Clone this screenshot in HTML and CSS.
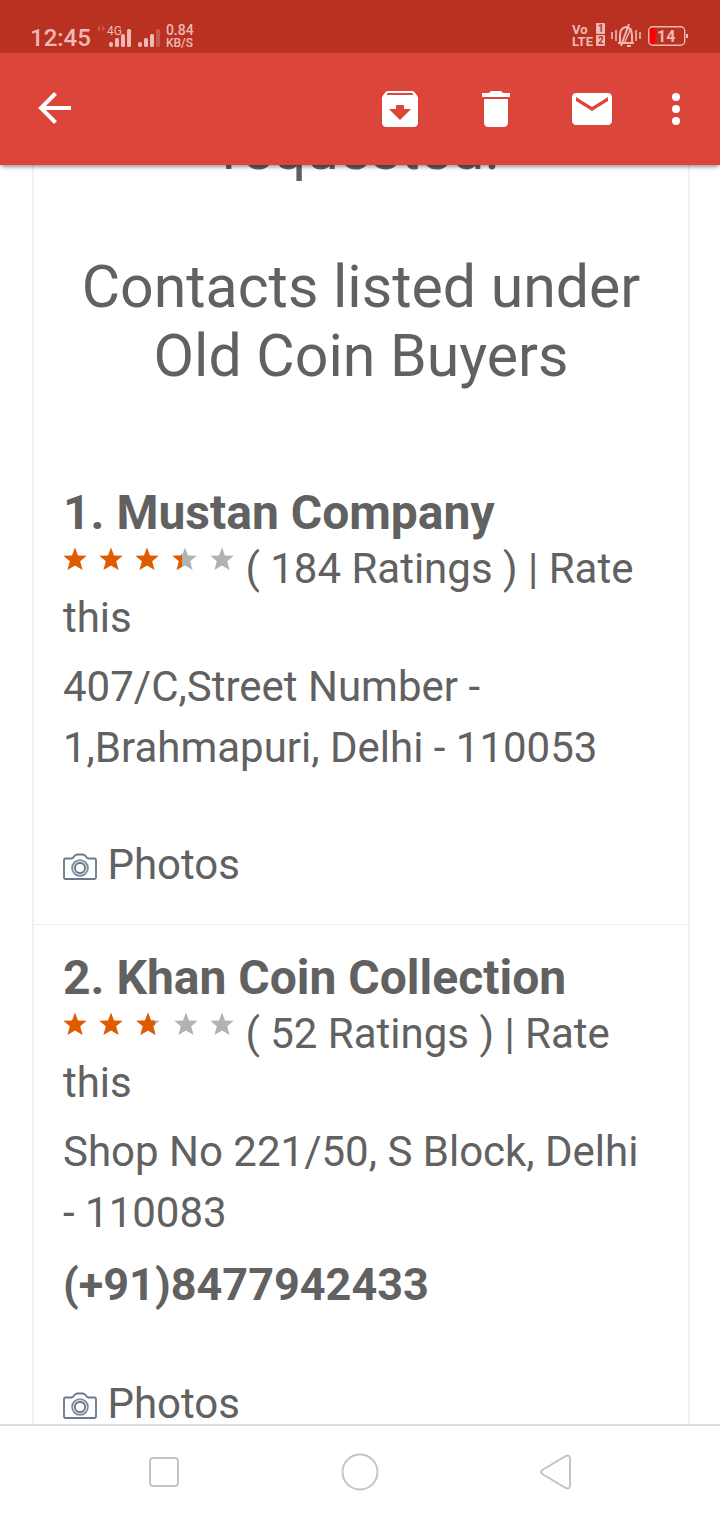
FILE: index.html
```html
<!DOCTYPE html>
<html lang="en">
<head>
<meta charset="utf-8">
<meta name="viewport" content="width=device-width, initial-scale=1">
<title>Old Coin Buyers</title>
<link rel="stylesheet" href="styles.css">
</head>
<body>
<svg class="defs" aria-hidden="true">
  <symbol id="star" viewBox="0 0 24 24"><path d="M12 0.5 15 8.5 23.7 8.7 17.2 14.2 19.6 23 12 18.4 4.4 23 6.8 14.2 0.3 8.7 9 8.5Z"/></symbol>
  <symbol id="camera" viewBox="0 0 34 28">
    <path d="M2.500 5.500H8.500Q10 5.500 11 3.500L12 2.500 14 1.500H20L22 2.500 23 3.500Q24 5.500 25.500 5.500H31.500Q33 5.500 33 7V24.500Q33 26 31.500 26H2.500Q1 26 1 24.500V7Q1 5.500 2.500 5.500Z" fill="#fff" stroke="#69788f" stroke-width="1.800"/>
    <circle cx="17" cy="15" r="8" fill="#d4d9e1" stroke="#7c899b" stroke-width="1.600"/>
    <circle cx="17" cy="15" r="5" fill="#fff" stroke="#69788f" stroke-width="1.800"/>
  </symbol>
</svg>

<div class="status">
  <div class="status-group">
    <span class="clock">12:45</span>
    <svg class="signal" width="65" height="26" viewBox="0 0 65 26" fill="#eeb9b4">
      <g opacity=".3"><path d="M4 2 1 5.500 4 9ZM6 2 9 5.500 6 9Z"/></g>
      <text class="net" x="11" y="12">4G</text>
      <rect x="13" y="19" width="4" height="5" rx="2"/><rect x="19" y="15" width="4" height="9" rx="1.500"/><rect x="25" y="11" width="4" height="13" rx="1.500"/><rect x="31" y="6" width="4" height="18" rx="1.500"/>
      <rect x="42" y="19" width="4" height="5" rx="2"/><rect x="48" y="15" width="4" height="9" rx="1.500"/><rect x="54" y="11" width="4" height="13" rx="1.500"/><rect x="60" y="6" width="4" height="18" rx="1.500" opacity=".3"/>
    </svg>
    <span class="speed"><span class="rate">0.84</span><span class="unit">KB/S</span></span>
  </div>
  <div class="status-group">
    <svg width="34" height="26" viewBox="0 0 34 26">
      <text class="volte" x="0" y="11">Vo</text><text class="volte" x="0" y="23">LTE</text>
      <rect x="24" y="0" width="9" height="11" rx="1" fill="#eeb9b4"/><rect x="24" y="12" width="9" height="11" rx="1" fill="#eeb9b4"/>
      <text class="sim" x="26" y="9">1</text><text class="sim" x="26" y="21">2</text>
    </svg>
    <svg class="bell" width="30" height="24" viewBox="0 0 30 24" fill="none" stroke="#eeb9b4" stroke-width="2">
      <path d="M1 8V15M5 6V17M25 6V17M29 8V15" stroke-width="1.600"/>
      <path d="M7 19H23M9 19V11Q9 4 15 3 21 4 21 11V19M18 0 10 22M16 22H20"/><path d="M20 4 13 20" stroke-width="1.400"/>
    </svg>
    <svg width="40" height="20" viewBox="0 0 40 20">
      <rect x="1.500" y="1.500" width="6" height="17" rx="1" fill="#f00"/>
      <rect x="0.700" y="0.700" width="36" height="18.600" rx="4" fill="none" stroke="#eeb9b4" stroke-width="1.400"/>
      <rect x="38" y="8" width="2" height="4" fill="#eeb9b4"/>
      <text class="battery" x="9" y="16">14</text>
    </svg>
  </div>
</div>

<header class="appbar">
  <button class="icon" aria-label="Back"><svg width="48" height="48" viewBox="0 0 48 48"><path d="M23.500 8.500 9 23 23.500 37.500M9 23H39" fill="none" stroke="#fff" stroke-width="4"/></svg></button>
  <div class="actions">
    <button class="icon" aria-label="Archive"><svg width="48" height="48" viewBox="0 0 24 24" fill="#fff"><path d="m20.540 5.230-1.390-1.680C18.880 3.210 18.470 3 18 3H6c-.47 0-.88.210-1.160.550L3.460 5.230C3.170 5.570 3 6.020 3 6.500V19c0 1.100.9 2 2 2h14c1.100 0 2-.9 2-2V6.500c0-.48-.17-.93-.46-1.270zM12 17.500 6.500 12H10v-2h4v2h3.500L12 17.500zM5.120 5l.81-1h12l.94 1H5.120z"/></svg></button>
    <button class="icon" aria-label="Delete"><svg width="48" height="48" viewBox="0 0 24 24" fill="#fff"><path d="M6 19c0 1.100.9 2 2 2h8c1.100 0 2-.9 2-2V7H6v12zM19 4h-3.500l-1-1h-5l-1 1H5v2h14V4z"/></svg></button>
    <button class="icon" aria-label="Mark as unread"><svg width="48" height="48" viewBox="0 0 24 24" fill="#fff"><path d="M20 4H4c-1.100 0-1.990.9-1.990 2L2 18c0 1.100.9 2 2 2h16c1.100 0 2-.9 2-2V6c0-1.100-.9-2-2-2zm0 4-8 5-8-5V6l8 5 8-5v2z"/></svg></button>
    <button class="icon" aria-label="More options"><svg width="24" height="48" viewBox="0 0 24 48" fill="#fff"><circle cx="12" cy="12" r="4"/><circle cx="12" cy="24" r="4"/><circle cx="12" cy="36" r="4"/></svg></button>
  </div>
</header>

<main class="mail">
  <article class="card">
    <p class="title">requested.</p>
    <h1 class="title">Contacts listed under Old Coin Buyers</h1>
    <section class="entry">
      <h2 class="name">1. Mustan Company</h2>
      <p class="rating"><svg class="stars" width="172" height="24" viewBox="0 0 172 24" role="img" aria-label="3.5 stars">
        <clipPath id="half"><rect x="108" width="11" height="24"/></clipPath>
        <g fill="#b1b3b2"><use href="#star" x="110" width="24" height="24"/><use href="#star" x="147" width="24" height="24"/></g>
        <g fill="#de5b00"><use href="#star" width="24" height="24"/><use href="#star" x="36" width="24" height="24"/><use href="#star" x="72" width="24" height="24"/></g>
        <g fill="#de5b00" clip-path="url(#half)"><use href="#star" x="109" width="24" height="24"/></g>
      </svg> ( 184 Ratings ) | Rate this</p>
      <p class="address">407/C,Street Number -<br>1,Brahmapuri, Delhi - 110053</p>
      <p class="photos"><svg width="34" height="28"><use href="#camera"/></svg> Photos</p>
    </section>
    <section class="entry">
      <h2 class="name">2. Khan Coin Collection</h2>
      <p class="rating"><svg class="stars" width="172" height="24" viewBox="0 0 172 24" role="img" aria-label="2.9 stars">
        <clipPath id="most"><rect x="72" width="20" height="24"/></clipPath>
        <g fill="#b1b3b2"><use href="#star" x="73" width="24" height="24"/><use href="#star" x="111" width="24" height="24"/><use href="#star" x="147" width="24" height="24"/></g>
        <g fill="#de5b00"><use href="#star" width="24" height="24"/><use href="#star" x="36" width="24" height="24"/></g>
        <g fill="#de5b00" clip-path="url(#most)"><use href="#star" x="73" width="24" height="24"/></g>
      </svg> ( 52 Ratings ) | Rate this</p>
      <p class="address">Shop No 221/50, S Block, Delhi - 110083</p>
      <p class="phone">(+91)8477942433</p>
      <p class="photos"><svg width="34" height="28"><use href="#camera"/></svg> Photos</p>
    </section>
  </article>
</main>

<nav class="navbar">
  <button class="icon" aria-label="Recent apps"><svg width="40" height="40" viewBox="0 0 40 40"><rect x="6" y="6" width="28" height="28" rx="3"/></svg></button>
  <button class="icon" aria-label="Home"><svg width="40" height="40" viewBox="0 0 40 40"><circle cx="20" cy="20" r="17.500"/></svg></button>
  <button class="icon" aria-label="Go back"><svg width="40" height="40" viewBox="0 0 40 40"><path d="M7 17.500 30 4Q34 2.500 34 6.500V33Q34 37.500 30 36L7 22.500Q3 20 7 17.500Z"/></svg></button>
</nav>
</body>
</html>
```
FILE: styles.css
```css
* { box-sizing: border-box; }

body {
  margin: 0;
  height: 100vh;
  display: flex;
  flex-direction: column;
  overflow: hidden;
  background: #fff;
  color: #616161;
  font-family: Roboto, "Liberation Sans", sans-serif;
}

h1, h2, p { margin: 0; }
svg { flex: none; }
.defs { position: absolute; width: 0; height: 0; }

.status {
  flex: none;
  height: 53px;
  padding: 0 32px 0 30px;
  display: flex;
  justify-content: space-between;
  background: #b93221;
  color: #eeb9b4;
}
.status-group {
  display: flex;
  align-items: center;
  gap: 5px;
  padding-top: 19px;
}
.clock { font-size: 24px; font-weight: 500; line-height: 28px; padding-top: 3px; }
.speed { display: flex; flex-direction: column; font-weight: 500; line-height: 13px; padding-top: 2px; }
.rate { font-size: 14px; }
.unit { font-size: 12px; }
.signal { margin-top: -1px; }
.net { font-size: 12px; }
.volte { font-size: 13px; font-weight: 700; fill: #eeb9b4; }
.sim { font-size: 10px; font-weight: 700; fill: #b93221; }
.battery { font-size: 16px; font-weight: 700; fill: #eeb9b4; }
.bell { margin-right: 2px; }

.appbar {
  flex: none;
  height: 112px;
  padding: 0 32px;
  display: flex;
  align-items: center;
  justify-content: space-between;
  background: #dc4539;
  box-shadow: 0 3px 4px -1px rgba(0, 0, 0, .4);
  z-index: 1;
}
.actions { display: flex; gap: 48px; }
.icon {
  display: flex;
  padding: 0;
  border: 0;
  background: none;
}

.mail {
  flex: 1;
  min-height: 0;
  overflow: hidden;
  padding: 0 30px 0 32px;
}
.card {
  margin-top: -51px;
  border: solid #f1f1f1;
  border-width: 0 2px;
}
.title {
  font-size: 59px;
  font-weight: 400;
  line-height: 69px;
  text-align: center;
  padding: 0 29px;
}
h1.title { margin: 69px 0 70px; }
.entry {
  padding: 25px 29px 35px;
  border-bottom: 1px solid #eee;
  font-size: 42px;
  line-height: 49px;
}
.name { font-size: 48px; font-weight: 700; line-height: 56px; }
.rating { padding-top: 3px; }
.stars { vertical-align: 12px; }
.address { line-height: 61px; padding-top: 14px; }
.phone { font-size: 45px; font-weight: 700; line-height: 64px; padding-top: 10px; }
.photos { padding-top: 62px; }
.photos svg { vertical-align: -2px; }

.navbar {
  flex: none;
  height: 96px;
  padding: 0 144px 2px;
  display: flex;
  align-items: center;
  justify-content: space-between;
  border-top: 2px solid #ddd;
  background: #fff;
}
.navbar svg { fill: none; stroke: #c4c4c4; stroke-width: 2; }
```
